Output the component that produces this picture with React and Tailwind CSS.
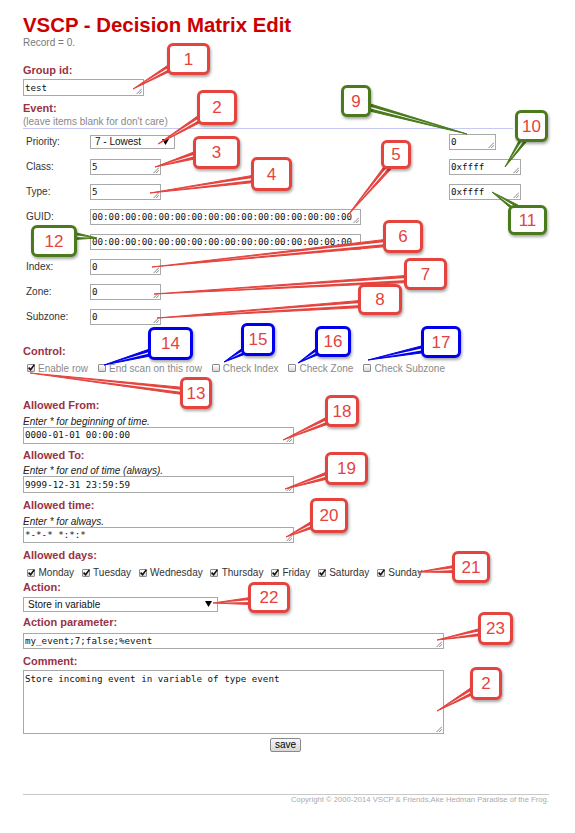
import React from "react";

const RED = "#e5433d";
const GREEN = "#4a7a1c";
const BLUE = "#0000ee";

const callouts = [
  { n: "1", c: RED, cls: "left-[167px] top-[43px] w-[43px] h-[32px] border-[#e5433d]", b: [173, 66], t: [133, 89] },
  { n: "2", c: RED, cls: "left-[197px] top-[90px] w-[40px] h-[35px] border-[#e5433d]", b: [201, 118], t: [158, 144] },
  { n: "3", c: RED, cls: "left-[193px] top-[136px] w-[47px] h-[33px] border-[#e5433d]", b: [196, 155], t: [155, 167] },
  { n: "4", c: RED, cls: "left-[251px] top-[157px] w-[41px] h-[34px] border-[#e5433d]", b: [253, 179], t: [150, 193] },
  { n: "5", c: RED, cls: "left-[381px] top-[140px] w-[30px] h-[29px] border-[#e5433d]", b: [389, 166], t: [348, 215] },
  { n: "6", c: RED, cls: "left-[383px] top-[220px] w-[40px] h-[33px] border-[#e5433d]", b: [386, 243], t: [152, 267] },
  { n: "7", c: RED, cls: "left-[404px] top-[258px] w-[43px] h-[32px] border-[#e5433d]", b: [407, 279], t: [154, 294] },
  { n: "8", c: RED, cls: "left-[358px] top-[284px] w-[44px] h-[31px] border-[#e5433d]", b: [361, 304], t: [157, 318] },
  { n: "9", c: GREEN, cls: "left-[341px] top-[85px] w-[30px] h-[32px] border-[#4a7a1c]", b: [368, 107], t: [467, 134] },
  { n: "10", c: GREEN, cls: "left-[515px] top-[110px] w-[33px] h-[32px] border-[#4a7a1c]", b: [524, 139], t: [505, 167] },
  { n: "11", c: GREEN, cls: "left-[508px] top-[205px] w-[39px] h-[30px] border-[#4a7a1c]", b: [516, 208], t: [492, 192] },
  { n: "12", c: GREEN, cls: "left-[31px] top-[225px] w-[46px] h-[32px] border-[#4a7a1c]", b: [74, 236], t: [97, 238] },
  { n: "13", c: RED, cls: "left-[180px] top-[377px] w-[32px] h-[32px] border-[#e5433d]", b: [183, 391], t: [30, 373] },
  { n: "14", c: BLUE, cls: "left-[148px] top-[327px] w-[45px] h-[33px] border-[#0000ee]", b: [152, 352], t: [104, 365] },
  { n: "15", c: BLUE, cls: "left-[241px] top-[323px] w-[34px] h-[33px] border-[#0000ee]", b: [246, 350], t: [224, 362] },
  { n: "16", c: BLUE, cls: "left-[315px] top-[326px] w-[36px] h-[31px] border-[#0000ee]", b: [320, 350], t: [298, 363] },
  { n: "17", c: BLUE, cls: "left-[421px] top-[326px] w-[40px] h-[32px] border-[#0000ee]", b: [424, 349], t: [368, 360] },
  { n: "18", c: RED, cls: "left-[325px] top-[395px] w-[34px] h-[32px] border-[#e5433d]", b: [329, 420], t: [283, 440] },
  { n: "19", c: RED, cls: "left-[325px] top-[452px] w-[43px] h-[33px] border-[#e5433d]", b: [329, 475], t: [285, 489] },
  { n: "20", c: RED, cls: "left-[310px] top-[498px] w-[38px] h-[35px] border-[#e5433d]", b: [314, 524], t: [286, 537] },
  { n: "21", c: RED, cls: "left-[452px] top-[551px] w-[38px] h-[32px] border-[#e5433d]", b: [455, 569], t: [418, 572] },
  { n: "22", c: RED, cls: "left-[248px] top-[582px] w-[42px] h-[31px] border-[#e5433d]", b: [251, 601], t: [213, 603] },
  { n: "23", c: RED, cls: "left-[478px] top-[612px] w-[35px] h-[33px] border-[#e5433d]", b: [481, 632], t: [437, 640] },
  { n: "2", c: RED, cls: "left-[470px] top-[667px] w-[32px] h-[33px] border-[#e5433d]", b: [474, 690], t: [437, 711] },
];

function tailPoints(b, t, hw, frac) {
  const dx = t[0] - b[0];
  const dy = t[1] - b[1];
  const len = Math.hypot(dx, dy) || 1;
  const px = (-dy / len) * hw;
  const py = (dx / len) * hw;
  const tx = b[0] + dx * frac;
  const ty = b[1] + dy * frac;
  return `${b[0] + px},${b[1] + py} ${tx},${ty} ${b[0] - px},${b[1] - py}`;
}

const Grip = () => (
  <svg className="absolute right-[1px] bottom-[1px]" width="6" height="6" viewBox="0 0 6 6">
    <path d="M6 0.6 L0.6 6 M6 3.2 L3.2 6" stroke="#666" strokeWidth="0.8" />
  </svg>
);

function TA({ cls, children, top }) {
  return (
    <div
      className={
        "relative shrink-0 border border-[#a9a9a9] bg-white overflow-hidden whitespace-nowrap pl-[1px] text-[9.2px] text-[#111] font-['DejaVu_Sans_Mono',monospace] " +
        (top ? "pt-[2px] leading-[11px] " : "flex items-center ") +
        cls
      }
    >
      <span>{children}</span>
      <Grip />
    </div>
  );
}

function Select({ cls, children }) {
  return (
    <div className={"relative shrink-0 flex items-center justify-between border border-[#a9a9a9] bg-white pl-[4px] text-[10px] text-[#111] " + cls}>
      <span>{children}</span>
      <svg width="7" height="6" viewBox="0 0 7 6" className="mr-[5px]">
        <path d="M0 0 L7 0 L3.5 6 Z" fill="#000" />
      </svg>
    </div>
  );
}

function Cb({ checked }) {
  return (
    <span className="relative shrink-0 w-[8px] h-[8px] border border-[#8c8c8c] rounded-[1px] bg-linear-to-b from-white to-[#d6d6d6]">
      {checked && (
        <svg className="absolute left-[-1px] top-[-2px]" width="9" height="9" viewBox="0 0 9 9">
          <path d="M1.6 4.6 L3.6 6.8 L7.4 1.6" fill="none" stroke="#111" strokeWidth="1.6" />
        </svg>
      )}
    </span>
  );
}

const Label = ({ cls, children }) => (
  <div className={"text-[11px] leading-[13px] font-bold text-[#993344] " + cls}>{children}</div>
);

const Hint = ({ children }) => (
  <div className="mt-[3.5px] text-[10px] leading-[11px] italic text-[#222]">{children}</div>
);

const GUID = "00:00:00:00:00:00:00:00:00:00:00:00:00:00:00:00";

const leftRows = [
  ["Priority:", <Select cls="w-[85px] h-[14px]">7 - Lowest</Select>],
  ["Class:", <TA cls="w-[71px] h-[16px]">5</TA>],
  ["Type:", <TA cls="w-[71px] h-[16px]">5</TA>],
  ["GUID:", <TA cls="w-[271px] h-[16px]">{GUID}</TA>],
  ["", <TA cls="w-[271px] h-[16px]">{GUID}</TA>],
  ["Index:", <TA cls="w-[71px] h-[16px]">0</TA>],
  ["Zone:", <TA cls="w-[71px] h-[16px]">0</TA>],
  ["Subzone:", <TA cls="w-[71px] h-[16px]">0</TA>],
];

const days = ["Monday", "Tuesday", "Wednesday", "Thursday", "Friday", "Saturday", "Sunday"];
const controls = [
  ["Enable row", true],
  ["End scan on this row", false],
  ["Check Index", false],
  ["Check Zone", false],
  ["Check Subzone", false],
];

export default function App() {
  return (
    <div className="relative w-[575px] h-[833px] bg-white overflow-hidden font-['Liberation_Sans',Arial,sans-serif]">
      <div className="pl-[23px]">
        <h1 className="pt-[13px] text-[20.4px] leading-[24px] font-bold text-[#cc0000]">VSCP - Decision Matrix Edit</h1>
        <div className="text-[10px] leading-[12px] text-[#777]">Record = 0.</div>

        <Label cls="mt-[15px]">Group id:</Label>
        <TA cls="mt-[2px] w-[121px] h-[17px]">test</TA>

        <Label cls="mt-[6px]">Event:</Label>
        <div className="mt-[1px] w-[490px] border-b border-[#c8c8f4] text-[10px] leading-[12px] text-[#888]">
          (leave items blank for don't care)
        </div>

        <div className="flex">
          <div className="w-[426px]">
            {leftRows.map(([l, el], i) => (
              <div key={i} className="h-[25px] flex items-center">
                <div className="w-[67px] pl-[3px] text-[10px] text-[#333]">{l}</div>
                {el}
              </div>
            ))}
          </div>
          <div>
            <div className="h-[25px] flex items-center"><TA cls="w-[47px] h-[16px]">0</TA></div>
            <div className="h-[25px] flex items-center"><TA cls="w-[72px] h-[16px]">0xffff</TA></div>
            <div className="h-[25px] flex items-center"><TA cls="w-[72px] h-[16px]">0xffff</TA></div>
          </div>
        </div>

        <Label cls="mt-[16px]">Control:</Label>
        <div className="mt-[4px] h-[12px] flex items-center pl-[4px] gap-[10px] text-[10px] text-[#8a8a8a]">
          {controls.map(([t, c]) => (
            <div key={t} className="flex items-center gap-[3px]">
              <Cb checked={c} />
              <span>{t}</span>
            </div>
          ))}
        </div>

        <Label cls="mt-[25px]">Allowed From:</Label>
        <Hint>Enter * for beginning of time.</Hint>
        <TA cls="w-[271px] h-[17px]">0000-01-01 00:00:00</TA>

        <Label cls="mt-[5px]">Allowed To:</Label>
        <Hint>Enter * for end of time (always).</Hint>
        <TA cls="w-[271px] h-[17px]">9999-12-31 23:59:59</TA>

        <Label cls="mt-[6px]">Allowed time:</Label>
        <Hint>Enter * for always.</Hint>
        <TA cls="w-[271px] h-[16px]">*-*-* *:*:*</TA>

        <Label cls="mt-[6px]">Allowed days:</Label>
        <div className="mt-[5px] h-[12px] flex items-center pl-[4px] gap-[7.5px] text-[10px] text-[#333]">
          {days.map((d) => (
            <div key={d} className="flex items-center gap-[3.5px]">
              <Cb checked />
              <span>{d}</span>
            </div>
          ))}
        </div>

        <Label cls="mt-[2px]">Action:</Label>
        <Select cls="mt-[3px] w-[195px] h-[15px]">Store in variable</Select>

        <Label cls="mt-[4px]">Action parameter:</Label>
        <TA cls="mt-[4px] w-[421px] h-[16px]">my_event;7;false;%event</TA>

        <Label cls="mt-[6px]">Comment:</Label>
        <TA top cls="mt-[2px] w-[421px] h-[64px]">Store incoming event in variable of type event</TA>

        <button
          type="button"
          className="block ml-[247px] mt-[4px] w-[31px] h-[14px] border border-[#8a8a8a] rounded-[2px] bg-linear-to-b from-[#f8f8f8] to-[#d8d8d8] text-[10px] leading-[12px] text-black"
        >
          save
        </button>

        <div className="mt-[42px] w-[526px] border-t border-[#c8c8c8]">
          <div className="text-right text-[7.7px] leading-[9px] text-[#ababab]">
            Copyright © 2000-2014 VSCP &amp; Friends,Ake Hedman Paradise of the Frog.
          </div>
        </div>
      </div>

      <svg className="absolute left-0 top-0 pointer-events-none" width="575" height="833" viewBox="0 0 575 833">
        {callouts.map((co, i) => (
          <g key={i}>
            <polygon
              points={tailPoints(co.b, co.t, 3.6, 1)}
              fill={co.c}
              stroke={co.c}
              strokeWidth="1"
              strokeLinejoin="round"
            />
            <polygon points={tailPoints(co.b, co.t, 0.9, 0.75)} fill="#ffffff" />
          </g>
        ))}
      </svg>

      {callouts.map((co, i) => (
        <div
          key={i}
          className={
            "absolute flex items-center justify-center bg-white border-[3px] rounded-[6px] shadow-[1px_2px_3px_rgba(0,0,0,0.35)] text-[17px] leading-none text-[#e5433d] " +
            co.cls
          }
        >
          {co.n}
        </div>
      ))}
    </div>
  );
}
